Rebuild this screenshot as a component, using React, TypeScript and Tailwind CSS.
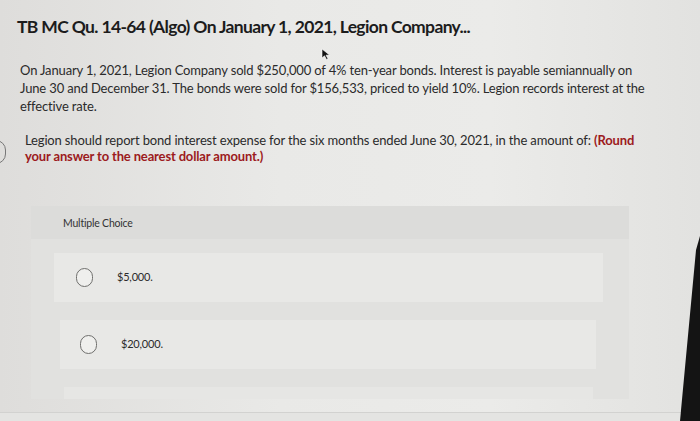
import React from 'react';

const Radio: React.FC = () => (
  <span className="inline-block h-[19px] w-[17px] shrink-0 rounded-full border border-[#6f6f6d] bg-[#efefed]" />
);

const App: React.FC = () => {
  const options = [
    { label: '$5,000.', box: 'ml-[23px] mr-[26px] pl-[22px]' },
    { label: '$20,000.', box: 'ml-[29px] mr-[33px] pl-[20px]' },
  ];

  return (
    <div
      className="relative flex h-[421px] w-[700px] flex-col overflow-hidden bg-[linear-gradient(90deg,#dedddb_0%,#e9e9e7_40%,#ebebe9_70%,#e2e2e0_100%)] text-[#262626]"
      style={{ fontFamily: 'Lato, "Open Sans", sans-serif' }}
    >
      <h1 className="ml-[17px] mt-[16px] text-[17.5px] font-bold leading-[22px] tracking-[-0.65px] text-[#1c1c1c]">
        TB MC Qu. 14-64 (Algo) On January 1, 2021, Legion Company...
      </h1>

      <p className="ml-[20px] mt-[23px] whitespace-nowrap text-[13px] leading-[18px] tracking-[-0.15px] text-[#2b2b2b]">
        On January 1, 2021, Legion Company sold $250,000 of 4% ten-year bonds. Interest is payable semiannually on
        <br />
        June 30 and December 31. The bonds were sold for $156,533, priced to yield 10%. Legion records interest at the
        <br />
        effective rate.
      </p>

      <p className="ml-[25px] mt-[17px] whitespace-nowrap text-[13px] leading-[16px] tracking-[-0.15px] text-[#2b2b2b]">
        Legion should report bond interest expense for the six months ended June 30, 2021, in the amount of:{' '}
        <span className="font-bold text-[#9c1a20]">(Round</span>
        <br />
        <span className="font-bold text-[#9c1a20]">your answer to the nearest dollar amount.)</span>
      </p>

      {/* multiple choice panel */}
      <div className="ml-[31px] mt-[42px] flex h-[193px] w-[598px] flex-col bg-[#e1e1df]">
        <div className="flex h-[38px] items-center bg-[#dcdcda] pl-[32px] pt-[2px] text-[10.5px] tracking-[-0.2px] text-[#333]">
          Multiple Choice
        </div>
        <div className="flex flex-col gap-[18px] pt-[14px]">
          {options.map(opt => (
            <div key={opt.label} className={`flex h-[49px] items-center bg-[#e8e8e6] ${opt.box}`}>
              <Radio />
              <span className="ml-[24px] text-[11px] tracking-[-0.2px] text-[#2b2b2b]">{opt.label}</span>
            </div>
          ))}
          <div className="ml-[33px] mr-[36px] h-[12px] bg-[#e6e6e4]" />
        </div>
      </div>
      <div className="h-[13px]" />
      <div className="flex-1 border-t border-[#d2d2d0] bg-[#e4e4e2]" />

      {/* partial circle at left edge */}
      <span className="absolute left-[-14px] top-[140px] h-[24px] w-[20px] rounded-full border border-[#777]" />

      {/* mouse pointer */}
      <svg className="absolute left-[321px] top-[48px]" width="10" height="12" viewBox="0 0 10 12">
        <path d="M1 1 L1 10 L3.5 7.8 L5.5 11.5 L7 10.8 L5 7.2 L8.5 7 Z" fill="#111" stroke="#fff" strokeWidth="0.6" />
      </svg>

      {/* monitor bezel seen at the right edge */}
      <svg className="absolute right-0 top-0" width="24" height="421" viewBox="0 0 24 421">
        <polygon points="24,236 24,421 4,421 20,250" fill="#141414" />
      </svg>
    </div>
  );
};

export default App;
